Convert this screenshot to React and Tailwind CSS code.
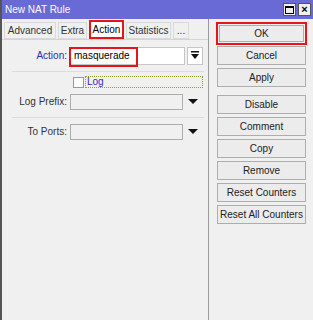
import React from "react";

const buttons = ["Cancel", "Apply", null, "Disable", "Comment", "Copy", "Remove", "Reset Counters", "Reset All Counters"];

const tabs = [
  { label: "Advanced", w: "w-[52px]" },
  { label: "Extra", w: "w-[29px]" },
  { label: "Action", w: "w-[35px]", active: true },
  { label: "Statistics", w: "w-[45px]" },
  { label: "...", w: "w-[16px]" },
];

function Btn({ label }) {
  return (
    <div className="h-[19px] w-[89px] border border-[#adadad] bg-[#ececec] flex items-center justify-center text-[10px] text-[#222]">
      {label}
    </div>
  );
}

function Tab({ label, active, w }) {
  if (active) {
    return (
      <div className={`${w} h-[19px] border-2 border-[#e8141b] bg-white flex items-center justify-center text-[10px] text-black`}>
        {label}
      </div>
    );
  }
  return (
    <div className={`${w} h-[17px] border border-[#d9d9d9] bg-[#f0f0f0] flex items-center justify-center text-[10px] text-[#333]`}>
      {label}
    </div>
  );
}

function Arrow() {
  return (
    <svg width="10" height="6" viewBox="0 0 10 6">
      <path d="M0 0h10L5 5z" fill="#111" />
    </svg>
  );
}

export default function App() {
  return (
    <div
      className="w-[313px] h-[320px] bg-[#f0f0f0] border-l-2 border-[#555] flex flex-col overflow-hidden"
      style={{ fontFamily: '"Liberation Sans", Arial, sans-serif' }}
    >
      <div className="h-[19px] bg-[#6a6ad6] flex items-center justify-between pl-[3px] pr-[2px]">
        <span className="text-white text-[10px]">New NAT Rule</span>
        <div className="flex gap-[2px]">
          <div className="w-[13px] h-[13px] bg-[#f0f0f0] border border-[#555] flex items-center justify-center">
            <div className="w-[9px] h-[8px] border border-black border-t-2" />
          </div>
          <div className="w-[13px] h-[13px] bg-[#f0f0f0] border border-[#555] flex items-center justify-center text-[11px] font-bold leading-none text-black">
            ×
          </div>
        </div>
      </div>

      <div className="flex flex-1">
        <div className="w-[207px] border-r border-[#9a9a9a] flex flex-col">
          <div className="flex items-end gap-[2px] pl-[2px] pt-[1px]">
            {tabs.map((t) => (
              <Tab key={t.label} {...t} />
            ))}
          </div>
          <div className="flex-1 border-t border-[#d4d4d4] pt-[6px] pr-[4px] text-[10px]">
            <div className="flex items-center h-[19px]">
              <span className="w-[68px] text-right pr-[3px] text-[#2b2bbf]">Action:</span>
              <div className="w-[115px] h-[18px] bg-white border border-[#c6c6c6] flex items-center relative">
                <div className="absolute -left-[2px] -top-[1px] w-[69px] h-[20px] border-2 border-[#e8141b]" />
                <span className="pl-[3px] text-black">masquerade</span>
              </div>
              <div className="ml-[2px] w-[16px] h-[18px] bg-white border border-[#c6c6c6] flex items-center justify-center">
                <svg width="8" height="9" viewBox="0 0 8 9">
                  <rect x="0" y="0" width="8" height="1.5" fill="#111" />
                  <path d="M0 3h8L4 8z" fill="#111" />
                </svg>
              </div>
            </div>
            <div className="ml-[10px] mt-[6px] border-t border-[#dcdcdc]" />
            <div className="flex items-center mt-[4px] ml-[71px]">
              <div className="w-[11px] h-[11px] bg-white border border-[#999]" />
              <div className="ml-[1px] w-[118px] h-[12px] border border-dotted border-[#9a9a30] flex items-center text-[#2b2bbf] leading-none pl-[1px]">
                Log
              </div>
            </div>
            <div className="flex items-center h-[17px] mt-[5px]">
              <span className="w-[68px] text-right pr-[3px] text-[#333]">Log Prefix:</span>
              <div className="w-[113px] h-[16px] bg-[#f0f0f0] border border-[#acacac]" />
              <div className="ml-[5px]"><Arrow /></div>
            </div>
            <div className="ml-[10px] mt-[7px] border-t border-[#dcdcdc]" />
            <div className="flex items-center h-[17px] mt-[5px]">
              <span className="w-[68px] text-right pr-[3px] text-[#333]">To Ports:</span>
              <div className="w-[113px] h-[16px] bg-[#f0f0f0] border border-[#acacac]" />
              <div className="ml-[5px]"><Arrow /></div>
            </div>
          </div>
        </div>

        <div className="flex-1 flex flex-col items-center pt-[3px] pl-[1px] gap-[3px]">
          <div className="border-2 border-[#e8141b] p-[1px] -mb-[2px]">
            <div className="h-[17px] w-[85px] bg-[#ececec] border border-[#adadad] flex items-center justify-center text-[10px] text-[#222]">
              OK
            </div>
          </div>
          {buttons.map((b, i) =>
            b ? <Btn key={i} label={b} /> : <div key={i} className="h-[2px]" />
          )}
        </div>
      </div>
    </div>
  );
}
